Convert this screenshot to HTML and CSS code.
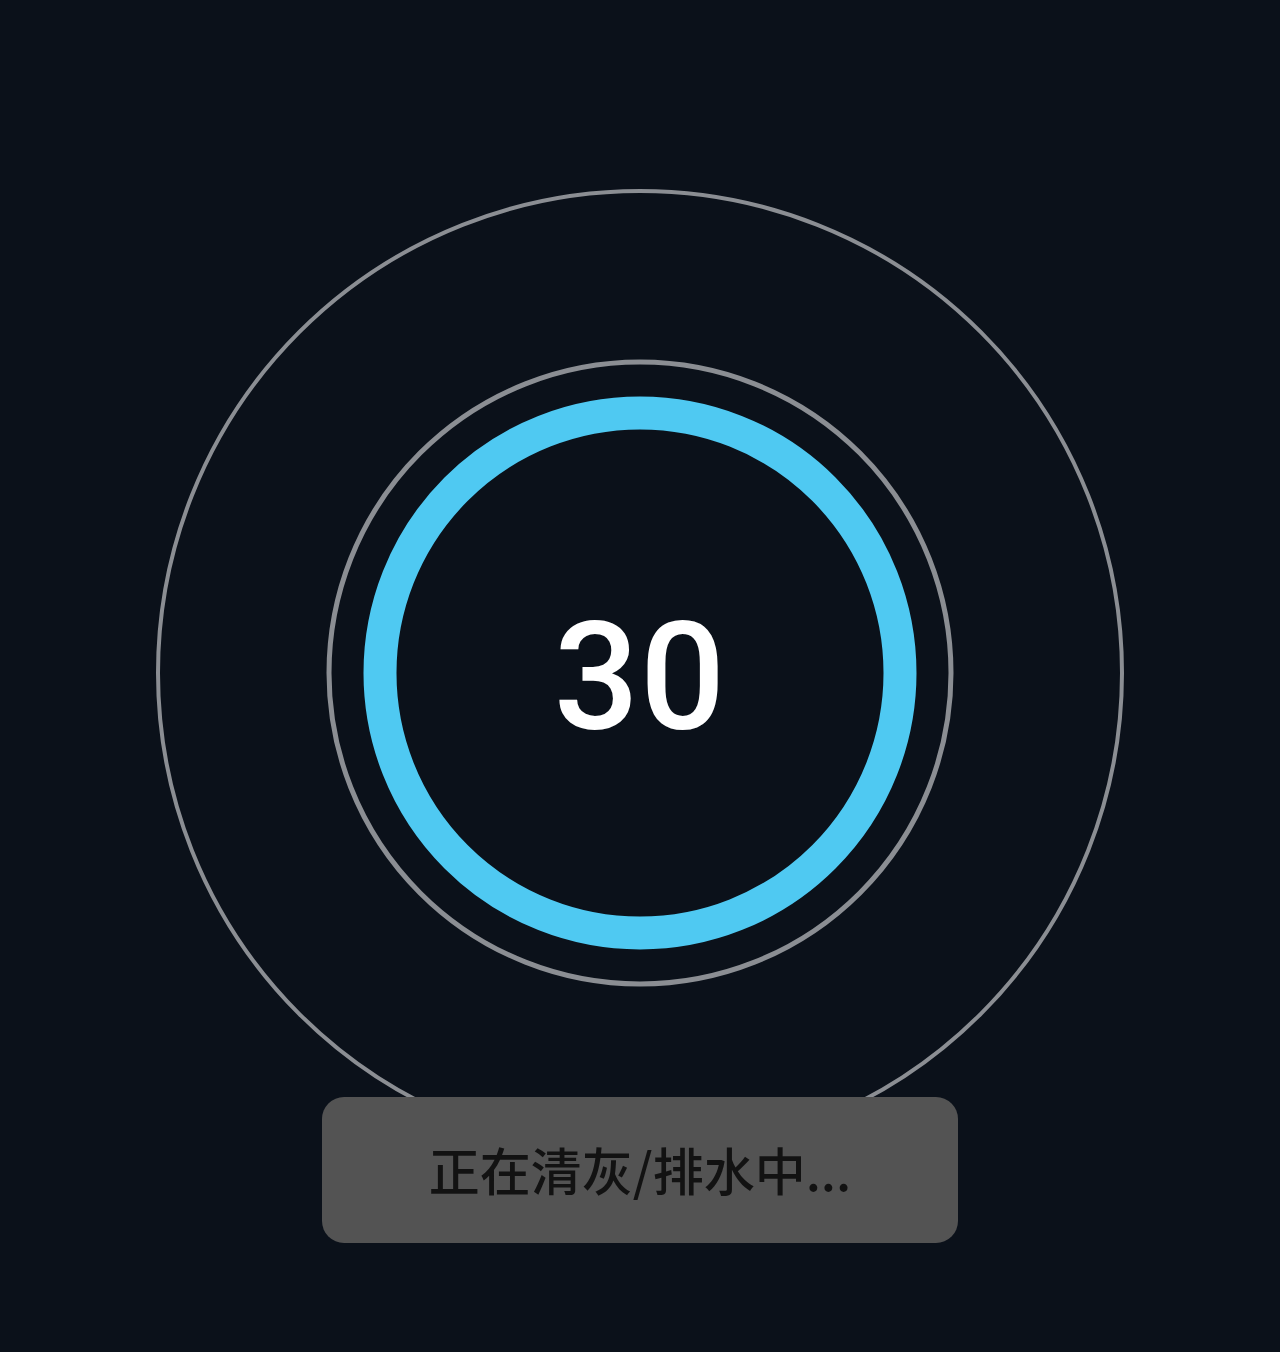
FILE: index.html
```html
<!DOCTYPE html>
<html lang="zh-CN">
<head>
<meta charset="utf-8">
<title>清灰排水</title>
<link rel="stylesheet" href="styles.css">
</head>
<body>
<div class="screen">
  <div class="dial">
    <svg class="rings" viewBox="0 0 968 968" width="968" height="968">
      <circle cx="484" cy="484" r="482" fill="none" stroke="#8b8e93" stroke-width="4"/>
      <circle cx="484" cy="484" r="311" fill="none" stroke="#8b8e93" stroke-width="5"/>
      <circle cx="484" cy="484" r="260" fill="none" stroke="#4fc9f2" stroke-width="33"/>
    </svg>
    <div class="count">30</div>
  </div>
  <div class="toast">正在清灰/排水中...</div>
</div>
</body>
</html>
```
FILE: styles.css
```css
html, body {
  margin: 0;
  padding: 0;
  background: #0b111a;
}
.screen {
  width: 1280px;
  height: 1352px;
  display: flex;
  flex-direction: column;
  align-items: center;
  padding-top: 189px;
  box-sizing: border-box;
  overflow: hidden;
}
.dial {
  width: 968px;
  height: 968px;
  display: grid;
  place-items: center;
}
.rings, .count {
  grid-area: 1 / 1;
}
.rings {
  display: block;
}
.count {
  font-family: Roboto, "Noto Sans", sans-serif;
  font-weight: 500;
  font-size: 150px;
  line-height: 1;
  color: #ffffff;
  letter-spacing: 1px;
  padding-top: 10px;
}
.toast {
  position: relative;
  z-index: 1;
  margin-top: -60px;
  width: 636px;
  height: 146px;
  border-radius: 22px;
  background: #535353;
  display: flex;
  align-items: center;
  justify-content: center;
  font-family: "Noto Sans CJK SC", "Noto Sans", sans-serif;
  font-weight: 500;
  font-size: 51px;
  color: #121212;
  padding-bottom: 2px;
  box-sizing: border-box;
}
```
